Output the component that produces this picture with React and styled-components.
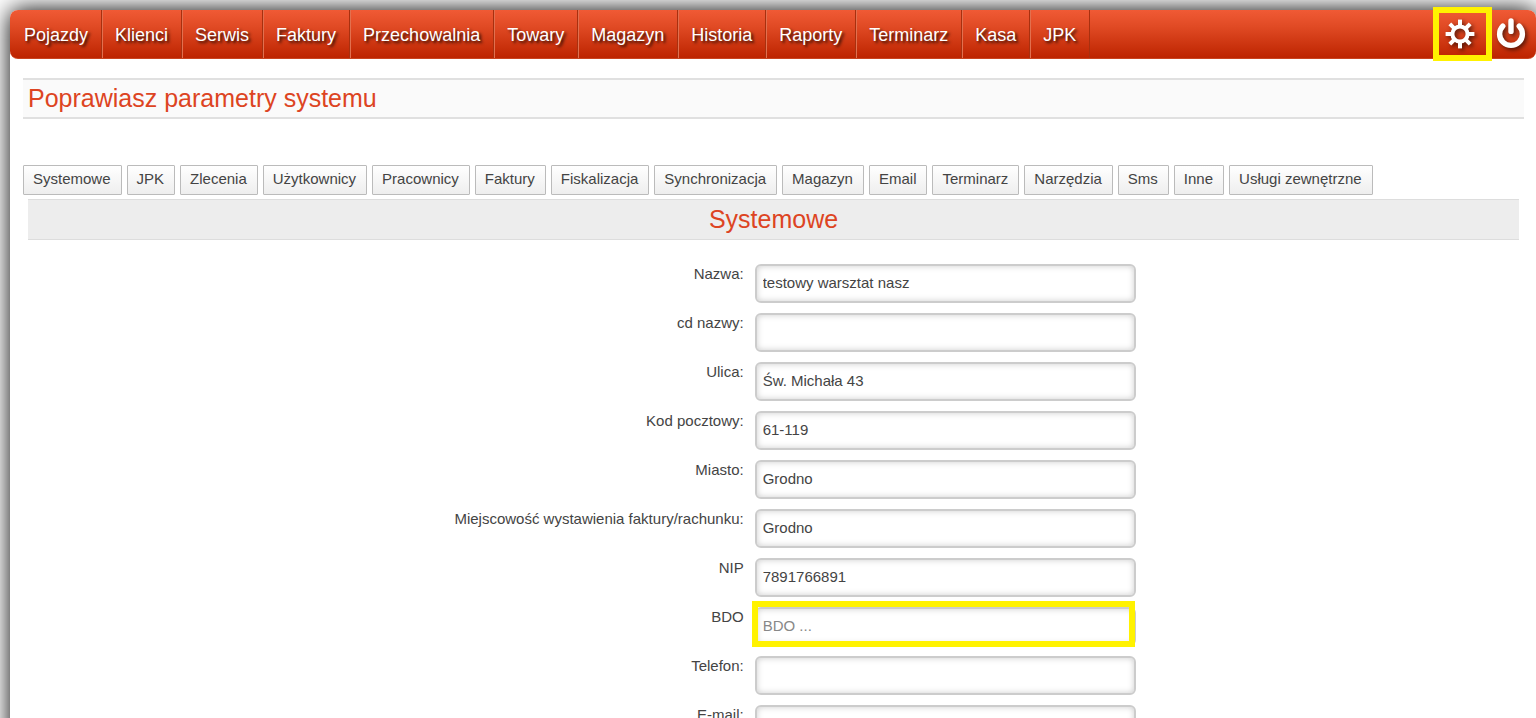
import styled, { createGlobalStyle } from "styled-components";

const GlobalStyle = createGlobalStyle`
  * {
    box-sizing: border-box;
  }

  body {
    margin: 0;
    overflow: hidden;
    background: #fff;
    color: #444;
    font-family: "Liberation Sans", Arial, sans-serif;
    font-size: 15px;
  }
`;

const Page = styled.div`
  margin: 10px 0 0 10px;
  background: #fff;
  border-radius: 8px 8px 0 0;
  box-shadow: 0 0 25px #000;
`;

const NavBar = styled.nav`
  display: flex;
  height: 49px;
  padding-left: 1px;
  border-radius: 8px;
  background: linear-gradient(#f05a35, #e04a24 35%, #bd2400);
  border-bottom: 1px solid #c9441f;
`;

const NavLink = styled.a`
  display: flex;
  align-items: center;
  padding: 2px 13px 0;
  border-right: 1px solid #a8300f;
  box-shadow: 1px 0 0 #e2704f;
  color: #fff;
  font-size: 18px;
  text-decoration: none;
  text-shadow: 2px 2px 3px rgba(0, 0, 0, 0.8);

  &:last-child {
    box-shadow: none;
  }
`;

const NavLinks = styled.div`
  display: flex;
  flex: 1;
`;

const NavTools = styled.div`
  display: flex;
  align-items: center;
  gap: 23px;
  padding-right: 11px;
`;

const IconButton = styled.button`
  position: relative;
  display: flex;
  padding: 0;
  border: none;
  background: none;
  cursor: pointer;

  svg {
    overflow: visible;
    filter: drop-shadow(2px 2px 2px rgba(0, 0, 0, 0.6));
  }
`;

const Highlight = styled.span`
  position: absolute;
  inset: ${({ $inset }) => $inset};
  border: 6px solid #fff200;
  pointer-events: none;
`;

const Content = styled.main`
  padding: 19px 12px 0 13px;
`;

const PageTitle = styled.h1`
  margin: 0 0 46px;
  padding: 0 5px;
  border: solid #e0e0e0;
  border-width: 2px 0;
  background: #fafafa;
  color: #dd4422;
  font-size: 25px;
  font-weight: 400;
  line-height: 37px;
`;

const Tabs = styled.div`
  display: flex;
  gap: 5px;
`;

const Tab = styled.button`
  height: 30px;
  padding: 0 10px 3px 9px;
  border: 1px solid #bbb;
  border-radius: 1px;
  background: linear-gradient(#fff, #eee);
  color: #444;
  font-family: inherit;
  font-size: 15px;
  white-space: nowrap;
  cursor: pointer;
`;

const Section = styled.section`
  margin: 4px 5px 0;
`;

const SectionTitle = styled.h2`
  margin: 0 0 24px;
  border: solid #ddd;
  border-width: 1px 0;
  background: #ededed;
  color: #dd4422;
  font-size: 25px;
  font-weight: 400;
  line-height: 39px;
  text-align: center;
`;

const Form = styled.form`
  display: flex;
  flex-direction: column;
  gap: 10px;
`;

const Row = styled.div`
  display: flex;
  gap: 11px;
`;

const Label = styled.label`
  width: 48%;
  line-height: 20px;
  text-align: right;
`;

const Field = styled.div`
  position: relative;
  width: 381px;
`;

const Input = styled.input`
  display: block;
  width: 100%;
  height: 39px;
  padding: 0 6px 2px;
  border: 2px solid #ccc;
  border-radius: 6px;
  outline: none;
  background: #fff;
  box-shadow: inset 0 0 6px #ccc;
  color: #444;
  font-family: inherit;
  font-size: 15px;

  &::placeholder {
    color: #888;
  }
`;

const navItems = [
  "Pojazdy",
  "Klienci",
  "Serwis",
  "Faktury",
  "Przechowalnia",
  "Towary",
  "Magazyn",
  "Historia",
  "Raporty",
  "Terminarz",
  "Kasa",
  "JPK",
];

const tabs = [
  "Systemowe",
  "JPK",
  "Zlecenia",
  "Użytkownicy",
  "Pracownicy",
  "Faktury",
  "Fiskalizacja",
  "Synchronizacja",
  "Magazyn",
  "Email",
  "Terminarz",
  "Narzędzia",
  "Sms",
  "Inne",
  "Usługi zewnętrzne",
];

const fields = [
  { id: "name", label: "Nazwa:", value: "testowy warsztat nasz" },
  { id: "name2", label: "cd nazwy:" },
  { id: "street", label: "Ulica:", value: "Św. Michała 43" },
  { id: "zip", label: "Kod pocztowy:", value: "61-119" },
  { id: "city", label: "Miasto:", value: "Grodno" },
  { id: "issueCity", label: "Miejscowość wystawienia faktury/rachunku:", value: "Grodno" },
  { id: "nip", label: "NIP", value: "7891766891" },
  { id: "bdo", label: "BDO", placeholder: "BDO ...", highlighted: true },
  { id: "phone", label: "Telefon:" },
  { id: "email", label: "E-mail:" },
];

const teeth = [0, 45, 90, 135, 180, 225, 270, 315];

function GearIcon() {
  return (
    <svg width="28" height="30" viewBox="-14 -15 28 30" aria-hidden="true">
      <circle r="7.6" fill="none" stroke="#fff" strokeWidth="4" />
      {teeth.map((angle) => (
        <path
          key={angle}
          d="M0-9V-12.4"
          stroke="#fff"
          strokeWidth="4"
          strokeLinecap="square"
          strokeLinejoin="round"
          transform={`rotate(${angle})`}
        />
      ))}
    </svg>
  );
}

function PowerIcon() {
  return (
    <svg width="28" height="30" viewBox="0 0 28 30" fill="none" stroke="#fff" strokeLinecap="round" aria-hidden="true">
      <path d="M5.8 7.1A11.4 11.4 0 1 0 22.2 7.1" strokeWidth="5.4" />
      <path d="M14 2V12.4" strokeWidth="5.4" />
    </svg>
  );
}

function App() {
  return (
    <>
      <GlobalStyle />
      <Page>
        <NavBar>
          <NavLinks>
            {navItems.map((item) => (
              <NavLink key={item} href="#">
                {item}
              </NavLink>
            ))}
          </NavLinks>
          <NavTools>
            <IconButton type="button" aria-label="Ustawienia">
              <GearIcon />
              <Highlight $inset="-12px -18px -12px -13px" />
            </IconButton>
            <IconButton type="button" aria-label="Wyloguj">
              <PowerIcon />
            </IconButton>
          </NavTools>
        </NavBar>
        <Content>
          <PageTitle>Poprawiasz parametry systemu</PageTitle>
          <Tabs>
            {tabs.map((tab) => (
              <Tab key={tab} type="button">
                {tab}
              </Tab>
            ))}
          </Tabs>
          <Section>
            <SectionTitle>Systemowe</SectionTitle>
            <Form>
              {fields.map(({ id, label, value, placeholder, highlighted }) => (
                <Row key={id}>
                  <Label htmlFor={id}>{label}</Label>
                  <Field>
                    <Input id={id} defaultValue={value} placeholder={placeholder} />
                    {highlighted && <Highlight $inset="-6px 1px -1px -3px" />}
                  </Field>
                </Row>
              ))}
            </Form>
          </Section>
        </Content>
      </Page>
    </>
  );
}

export default App;
